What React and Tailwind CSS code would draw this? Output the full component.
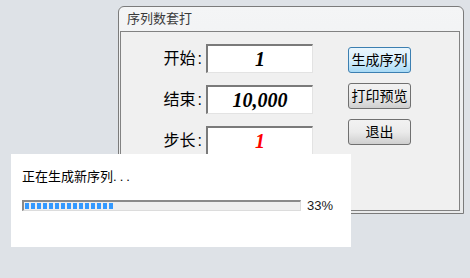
import React from 'react';

const cjk = { fontFamily: '"Liberation Sans", "Noto Sans CJK SC", sans-serif' };

const fields = [
  { label: '开始', value: '1', red: false },
  { label: '结束', value: '10,000', red: false },
  { label: '步长', value: '1', red: true },
];

function Field({ label, value, red }) {
  return (
    <div className="flex items-center h-[29px]">
      <div className="w-[85px] pr-[4px] text-right text-[16px] text-black leading-none">
        {label}
        <span className="ml-[2px]">:</span>
      </div>
      <div className="w-[107px] h-[29px] bg-white border-t-2 border-l-2 border-b border-r border-t-[#7a7a7a] border-l-[#7a7a7a] border-b-[#e3e3e3] border-r-[#e3e3e3] flex items-center justify-center">
        <span
          className={`text-[20px] font-bold italic leading-none ${red ? 'text-[#ff0000]' : 'text-black'}`}
          style={{ fontFamily: '"Liberation Serif", serif' }}
        >
          {value}
        </span>
      </div>
    </div>
  );
}

function Button({ children, primary }) {
  return (
    <button
      className={`w-[63px] h-[26px] rounded-[3px] border text-[14px] leading-none text-black flex items-center justify-center ${
        primary
          ? 'border-[#3c7fb1] bg-gradient-to-b from-[#eaf6fd] via-[#d9f0fc] to-[#a7d9f5]'
          : 'border-[#707070] bg-gradient-to-b from-[#f2f2f2] via-[#ebebeb] to-[#cfcfcf]'
      }`}
    >
      {children}
    </button>
  );
}

export default function App() {
  const progress = 33;
  const blocks = 15;

  return (
    <div className="relative w-[470px] h-[278px] bg-[#dee2e7] overflow-hidden pt-[6px] pl-[118px]" style={cjk}>
      {/* main window */}
      <div className="w-[346px] h-[208px] border border-[#7b7b7b] rounded-t-[6px] bg-gradient-to-b from-[#f4f5f6] to-[#e9eaeb] pl-px pr-[3px] pb-[2px] flex flex-col">
        <div className="h-[24px] flex items-center pl-[7px] text-[13px] text-[#3a3a3a]">序列数套打</div>
        <div className="flex-1 border border-[#828282] bg-[#f0f0f0] flex pt-[12px]">
          <div className="flex flex-col gap-[12px]">
            {fields.map((f) => (
              <Field key={f.label} {...f} />
            ))}
          </div>
          <div className="ml-[35px] mt-[3px] flex flex-col gap-[10px]">
            <Button primary>生成序列</Button>
            <Button>打印预览</Button>
            <Button>退出</Button>
          </div>
        </div>
      </div>

      {/* progress dialog */}
      <div className="absolute left-[11px] top-[154px] w-[340px] h-[93px] bg-white pl-[11px] pt-[16px]">
        <div className="text-[13px] leading-none text-black">
          正在生成新序列<span className="tracking-[3px]">...</span>
        </div>
        <div className="mt-[16px] flex items-center">
          <div className="w-[279px] h-[11px] bg-[#eeeeee] border-t-2 border-l-2 border-b border-r border-t-[#8a8a8a] border-l-[#8a8a8a] border-b-[#dcdcdc] border-r-[#dcdcdc] flex items-center pl-[1px] gap-[2px]">
            {Array.from({ length: blocks }).map((_, i) => (
              <div key={i} className="w-[4px] h-[6px] bg-[#3399ff]" />
            ))}
          </div>
          <span className="ml-[6px] text-[13px] leading-none text-[#1a1a1a]">{progress}%</span>
        </div>
      </div>
    </div>
  );
}
